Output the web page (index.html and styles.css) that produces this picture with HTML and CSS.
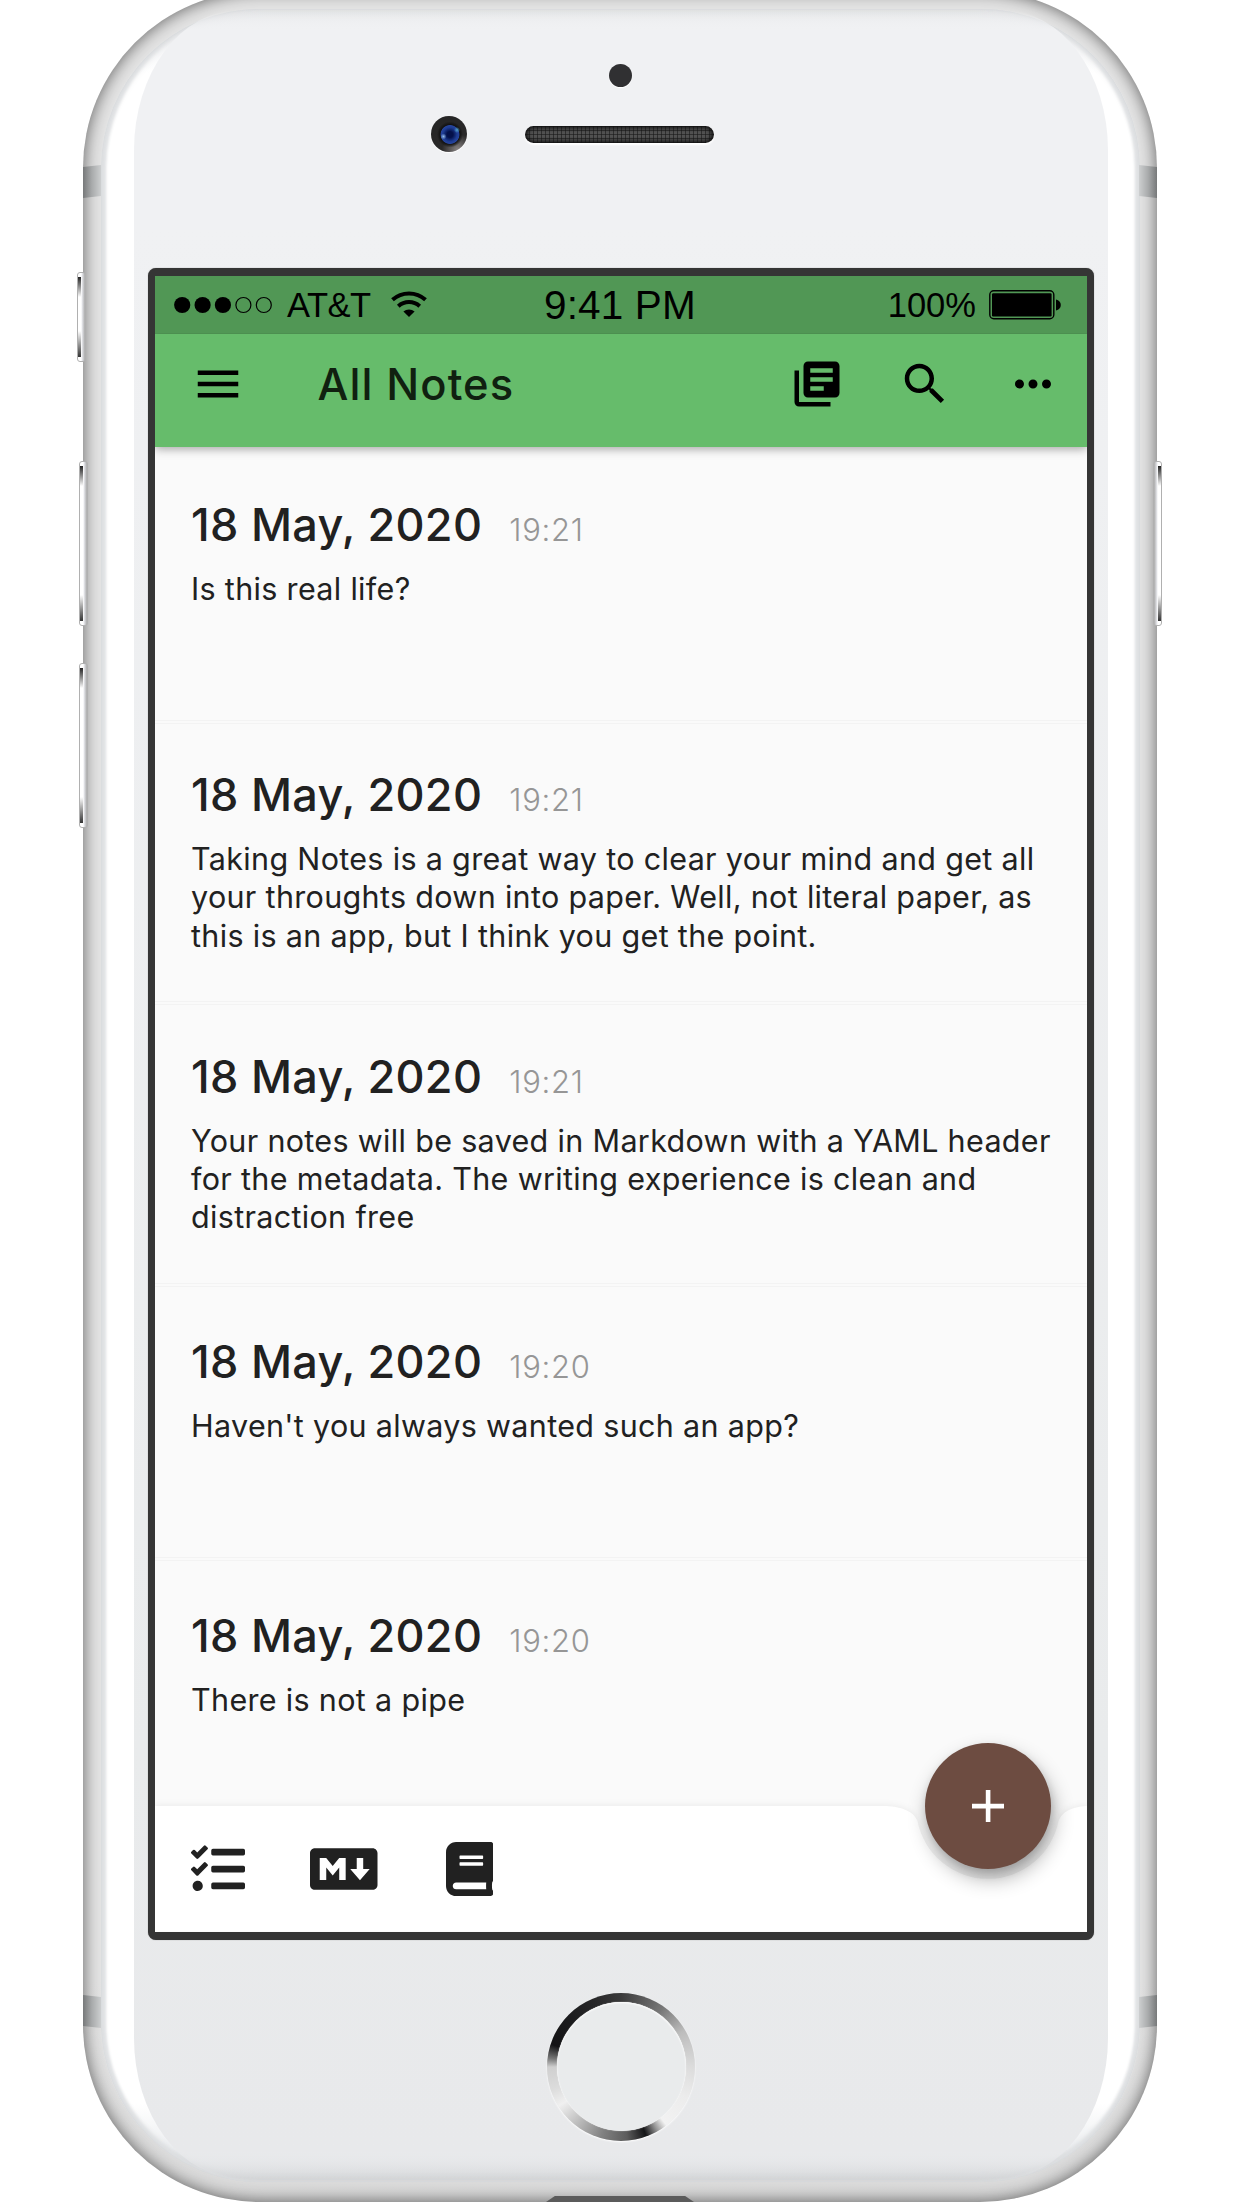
FILE: index.html
```html
<!DOCTYPE html>
<html lang="en">
<head>
<meta charset="utf-8">
<title>All Notes</title>
<link rel="stylesheet" href="styles.css">
</head>
<body>
<div class="stage">
  <div class="phone">
    <i class="side-button mute"></i>
    <i class="side-button volume-up"></i>
    <i class="side-button volume-down"></i>
    <i class="side-button power"></i>
    <i class="antenna top left"></i>
    <i class="antenna top right"></i>
    <i class="antenna bottom left"></i>
    <i class="antenna bottom right"></i>
    <i class="port"></i>
    <div class="glass">
      <div class="face">
        <div class="earpiece">
          <i class="sensor"></i>
          <i class="camera"></i>
          <i class="speaker"></i>
        </div>
        <div class="screen">
          <div class="status">
            <div class="status-left">
              <svg class="signal" width="98" height="18" viewBox="0 0 98 18"><circle cx="8.2" cy="9" r="8.1"/><circle cx="28.6" cy="9" r="8.1"/><circle cx="48.9" cy="9" r="8.1"/><g fill="none" stroke="#000" stroke-width="1.2"><circle cx="69.4" cy="9" r="7.5"/><circle cx="89.8" cy="9" r="7.5"/></g></svg>
              <span class="carrier">AT&amp;T</span>
              <svg class="wifi" width="36" height="26" viewBox="0 0 36 26"><path d="M18 26l-5.6-5.6a9 9 0 0 1 11.2 0z"/><g fill="none" stroke="#000" stroke-width="4"><path d="M1.5 8.800a24.500 24.500 0 0 1 33 0"/><path d="M7.300 15.200a16 16 0 0 1 21.400 0"/></g></svg>
            </div>
            <span class="clock">9:41 PM</span>
            <div class="status-right">
              <span class="percent">100%</span>
              <svg class="battery" width="72" height="30" viewBox="0 0 72 30"><rect x=".8" y=".8" width="64" height="28" rx="4" fill="none" stroke="#000" stroke-width="1.4"/><rect x="3" y="3.200" width="59.600" height="23.200" rx="1.200"/><path d="M67 9.500c3 .6 4.800 2.800 4.800 5.500s-1.800 4.900-4.800 5.500z"/></svg>
            </div>
          </div>
          <div class="appbar">
            <svg class="icon menu" viewBox="0 0 24 24"><path d="M3 18h18v-2H3v2zm0-5h18v-2H3v2zm0-7v2h18V6H3z"/></svg>
            <h1 class="heading">All Notes</h1>
            <div class="actions">
              <svg class="icon" viewBox="0 0 24 24"><path d="M4 6H2v14c0 1.100.9 2 2 2h14v-2H4V6zm16-4H8c-1.100 0-2 .9-2 2v12c0 1.100.9 2 2 2h12c1.100 0 2-.9 2-2V4c0-1.100-.9-2-2-2zm-1 9H9V9h10v2zm-4 4H9v-2h6v2zm4-8H9V5h10v2z"/></svg>
              <svg class="icon" viewBox="0 0 24 24"><path d="M15.500 14h-.79l-.28-.27C15.410 12.590 16 11.110 16 9.500 16 5.910 13.090 3 9.500 3S3 5.910 3 9.500 5.910 16 9.500 16c1.610 0 3.090-.59 4.230-1.570l.27.28v.79l5 4.990L20.490 19l-4.990-5zm-6 0C7.010 14 5 11.990 5 9.500S7.010 5 9.500 5 14 7.010 14 9.500 11.990 14 9.500 14z"/></svg>
              <svg class="icon" viewBox="0 0 24 24"><path d="M6 10c-1.100 0-2 .9-2 2s.9 2 2 2 2-.9 2-2-.9-2-2-2zm12 0c-1.100 0-2 .9-2 2s.9 2 2 2 2-.9 2-2-.9-2-2-2zm-6 0c-1.100 0-2 .9-2 2s.9 2 2 2 2-.9 2-2-.9-2-2-2z"/></svg>
            </div>
          </div>
          <div class="notes">
            <article class="note">
              <header class="note-head"><h2 class="date">18 May, 2020</h2><span class="time">19:21</span></header>
              <p class="text">Is this real life?</p>
            </article>
            <article class="note tall">
              <header class="note-head"><h2 class="date">18 May, 2020</h2><span class="time">19:21</span></header>
              <p class="text">Taking Notes is a great way to clear your mind and get all<br>your throughts down into paper. Well, not literal paper, as<br>this is an app, but I think you get the point.</p>
            </article>
            <article class="note tall">
              <header class="note-head"><h2 class="date">18 May, 2020</h2><span class="time">19:21</span></header>
              <p class="text">Your notes will be saved in Markdown with a YAML header<br>for the metadata. The writing experience is clean and<br>distraction free</p>
            </article>
            <article class="note">
              <header class="note-head"><h2 class="date">18 May, 2020</h2><span class="time">19:20</span></header>
              <p class="text">Haven't you always wanted such an app?</p>
            </article>
            <article class="note">
              <header class="note-head"><h2 class="date">18 May, 2020</h2><span class="time">19:20</span></header>
              <p class="text">There is not a pipe</p>
            </article>
          </div>
          <div class="bottombar">
            <svg class="bar-shape" width="932" height="126" viewBox="0 0 932 126"><path d="M0 0H726C748 0 759 6 762.400 15A72 72 0 0 0 903.600 15C907 6 916 1 932 0V126H0z"/></svg>
            <svg class="tool" width="54" height="54" viewBox="0 0 512 512"><path d="M139.610 35.500a12 12 0 0 0-17 0L58.930 98.810l-22.700-22.120a12 12 0 0 0-17 0L3.530 92.410a12 12 0 0 0 0 17l47.590 47.400a12.780 12.780 0 0 0 17.610 0l15.590-15.620L156.520 69a12.090 12.090 0 0 0 .09-17zm0 159.190a12 12 0 0 0-17 0l-63.680 63.720-22.700-22.100a12 12 0 0 0-17 0L3.530 252a12 12 0 0 0 0 17L51 316.500a12.770 12.770 0 0 0 17.600 0l15.700-15.690 72.200-72.220a12 12 0 0 0 .09-16.900zM64 368c-26.490 0-48.590 21.500-48.590 48S37.530 464 64 464a48 48 0 0 0 0-96zm432 16H208a16 16 0 0 0-16 16v32a16 16 0 0 0 16 16h288a16 16 0 0 0 16-16v-32a16 16 0 0 0-16-16zm0-320H208a16 16 0 0 0-16 16v32a16 16 0 0 0 16 16h288a16 16 0 0 0 16-16V80a16 16 0 0 0-16-16zm0 160H208a16 16 0 0 0-16 16v32a16 16 0 0 0 16 16h288a16 16 0 0 0 16-16v-32a16 16 0 0 0-16-16z"/></svg>
            <svg class="tool" width="67.5" height="54" viewBox="0 0 640 512"><path d="M593.800 59.100H46.200C20.700 59.100 0 79.800 0 105.200v301.500c0 25.500 20.700 46.200 46.200 46.200h547.700c25.500 0 46.200-20.700 46.100-46.100V105.200c0-25.400-20.700-46.100-46.200-46.100zM338.500 360.600H277v-120l-61.500 76.900-61.500-76.900v120H92.300V151.400h61.500l61.500 76.900 61.500-76.900h61.500v209.200zm135.300 3.100L381.500 256H443V151.400h61.500V256H566z"/></svg>
            <svg class="tool book" width="47.25" height="54" viewBox="0 0 448 512"><path d="M448 360V24c0-13.300-10.700-24-24-24H96C43 0 0 43 0 96v320c0 53 43 96 96 96h328c13.300 0 24-10.700 24-24v-16c0-7.500-3.500-14.300-8.900-18.700-4.200-15.400-4.200-59.300 0-74.700 5.400-4.300 8.900-11.100 8.900-18.600zM128 134c0-3.300 2.700-6 6-6h212c3.300 0 6 2.700 6 6v20c0 3.300-2.700 6-6 6H134c-3.300 0-6-2.700-6-6v-20zm0 64c0-3.300 2.700-6 6-6h212c3.300 0 6 2.700 6 6v20c0 3.300-2.700 6-6 6H134c-3.300 0-6-2.700-6-6v-20zm253.400 250H96c-17.700 0-32-14.300-32-32 0-17.600 14.400-32 32-32h285.400c-1.900 17.100-1.900 46.900 0 64z"/></svg>
            <div class="fab"><svg width="32" height="32" viewBox="0 0 32 32"><path d="M13.800 0h4.600v13.800H32v4.600H18.400V32h-4.600V18.400H0v-4.600h13.800z" fill="#fff"/></svg></div>
          </div>
        </div>
        <div class="home"><i class="home-face"></i></div>
      </div>
    </div>
  </div>
</div>
</body>
</html>
```
FILE: styles.css
```css
* { box-sizing: border-box; }
body { margin: 0; background: #fff; font-family: Inter, "Liberation Sans", sans-serif; }
h1, h2, p { margin: 0; font-weight: inherit; }
i, svg { display: block; }

.stage { width: 1242px; height: 2208px; overflow: hidden; display: flow-root; }

/* Device */
.phone {
  position: relative;
  width: 1074px;
  height: 2211px;
  margin: -9px 0 0 83px;
  padding: 18px 17px 0 18px;
  border-radius: 177px;
  background: linear-gradient(#e4e4e4, #e4e4e4 90%, #dadada);
  box-shadow: inset 0 0 17px rgba(0, 0, 0, .6);
}
.glass {
  height: 2173px;
  padding: 1px 32px 0 33px;
  border-radius: 159px;
  background: linear-gradient(#e6e7e9, #f0f1f3 22px, #fff 64px, #fff 2095px, #eceef0 2140px, #d3d5d7);
  box-shadow: inset 0 0 2px #cfd1d3, inset 5px 0 3px #dfe1e3, inset -5px 0 3px #dfe1e3, inset 0 6px 8px -2px #dfe0e2, inset 0 -6px 6px -2px #d3d5d7;
}
.face {
  height: 2168px;
  padding: 0 14px;
  border-radius: 105px / 140px;
  background: linear-gradient(rgba(240, 241, 243, 0), #f0f1f3 20px, #f0f1f3 10%, #e9ebec 80%, #e8e9eb 2140px, rgba(220, 222, 224, 0));
}
.side-button {
  position: absolute;
  width: 9px;
  height: 165px;
  border-radius: 3px;
  border: 1px solid #b0b0b0;
  background:
    linear-gradient(#222, transparent 20px, transparent calc(100% - 26px), #333) 0 4px / 3px calc(100% - 8px) no-repeat,
    linear-gradient(90deg, #fff 45%, #e3e4e8 60%, #aaa);
}
.mute { left: -6px; top: 281px; height: 90px; }
.volume-up { left: -4px; top: 470px; }
.volume-down { left: -4px; top: 672px; }
.power { right: -5px; top: 470px; transform: scaleX(-1); }
.antenna {
  position: absolute;
  width: 18px;
  height: 33px;
  background: linear-gradient(90deg, #77797a, #a9abac 50%, #cdcfd0);
  clip-path: polygon(0 6%, 100% 0, 100% 94%, 0 100%);
}
.antenna.top { top: 174px; }
.antenna.bottom { top: 2004px; clip-path: polygon(0 0, 100% 6%, 100% 100%, 0 94%); }
.antenna.left { left: 0; }
.antenna.right { right: 0; }
.antenna.top.right { transform: scaleX(-1); }
.antenna.bottom.right { transform: scaleX(-1); }
.port {
  position: absolute;
  left: 463px;
  bottom: 0;
  width: 148px;
  height: 6px;
  background: #5b5b5b;
  clip-path: polygon(6% 0, 94% 0, 100% 100%, 0 100%);
}
.earpiece { position: relative; height: 257.500px; }
.sensor {
  position: absolute;
  left: 461px;
  top: 53.500px;
  width: 23px;
  height: 23px;
  border-radius: 50%;
  background: #303032;
  box-shadow: 0 1px 1px #fff;
}
.camera {
  position: absolute;
  left: 283px;
  top: 106px;
  width: 36px;
  height: 36px;
  border-radius: 50%;
  background:
    radial-gradient(circle at 12.500px 20.500px, #8fb8e6, rgba(80, 130, 210, 0) 3px),
    radial-gradient(circle at 26px 14px, #4fa0c8, rgba(80, 130, 210, 0) 3px),
    radial-gradient(circle at 19px 18.500px, #04114a 3px, #1d3c93 7px, #26449c 9px, rgba(15, 15, 15, .9) 9.800px, rgba(30, 30, 30, 0) 13px),
    radial-gradient(circle at 27px 34px, #8a8585, #2a2929 16px, #232323);
  box-shadow: 0 1px 1px #fff;
}
.speaker {
  position: absolute;
  left: 377px;
  top: 116px;
  width: 189px;
  height: 17px;
  border-radius: 9px;
  background:
    repeating-linear-gradient(90deg, rgba(20, 20, 20, .55) 0 1px, transparent 1px 4px),
    repeating-linear-gradient(rgba(20, 20, 20, .55) 0 1px, transparent 1px 4px),
    #515151;
  box-shadow: inset 0 0 4px 2px #111, 0 2px 2px #fff;
}
.home {
  width: 148px;
  height: 148px;
  margin: 53px auto 0;
  padding: 9.500px;
  border-radius: 50%;
  background: conic-gradient(#3a3a3b, #777 35deg, #bcbcbc 60deg, #dcdcdc 90deg, #ececec 115deg, #f2f2f2 142deg, #999 150deg, #151517 160deg, #5c5c5c 175deg, #808080 195deg, #b5b5b5 215deg, #f0f0f0 238deg, #dcdcdc 252deg, #cfcfcf 270deg, #777 277deg, #131315 288deg, #1c1c1e 315deg, #29292a 340deg, #3a3a3b);
  box-shadow: 0 1px 2px #fff;
}
.home-face {
  height: 100%;
  border-radius: 50%;
  background: #e9ebec;
  box-shadow: inset 0 1px 2px #fff, 0 0 1px #fff;
}

/* Screen */
.screen {
  height: 1672px;
  border: 7.500px solid #353535;
  border-width: 8px 7px;
  border-radius: 8px;
  background: #fafafa;
  box-shadow: 0 0 1px #777;
  display: flex;
  flex-direction: column;
}
.status {
  position: relative;
  flex: none;
  height: 58px;
  padding: 1px 26px 0 19px;
  background: #519755;
  font-family: "Liberation Sans", Arial, sans-serif;
  display: grid;
  grid-template-columns: 1fr auto 1fr;
  align-items: center;
  color: #000;
}
.status-left, .status-right { display: flex; align-items: center; }
.status-right { justify-content: flex-end; gap: 13px; }
.signal { margin-right: 15px; }
.carrier, .percent { font-size: 34.500px; line-height: 38px; }
.carrier { width: 83px; letter-spacing: -.5px; }
.wifi { margin-left: 21px; margin-top: -2px; }
.clock { margin-left: 5px; font-size: 40.500px; line-height: 46px; letter-spacing: .15px; }
.appbar {
  position: relative;
  z-index: 1;
  flex: none;
  height: 113px;
  padding: 0 0 13px 9px;
  background: #66bc6b;
  display: flex;
  align-items: center;
  box-shadow: 0 2px 9px rgba(0, 0, 0, .35);
  clip-path: inset(0 0 -20px 0);
}
.icon { width: 108px; height: 54px; padding: 0 27px; flex: none; }
.heading {
  margin-left: 45.500px;
  font-size: 43.500px;
  font-weight: 450;
  letter-spacing: 1.100px;
  line-height: 54px;
  color: #102010;
}
.actions { display: flex; margin-left: auto; }

.notes { height: 1359px; overflow: hidden; }
.note {
  height: 274px;
  padding: 51px 36px 0;
  border-bottom: 1px solid #f3f3f3;
  box-shadow: 0 2px 0 #fafafa, 0 3px 0 #f3f3f3;
}
.note.tall { height: 281.500px; padding-top: 47.500px; }
.note-head { display: flex; align-items: baseline; }
.date {
  font-size: 45px;
  font-weight: 480;
  line-height: 54px;
  letter-spacing: .3px;
  color: #212121;
  white-space: nowrap;
}
.time { margin-left: 27px; font-size: 31px; font-weight: 350; letter-spacing: .7px; line-height: 38px; color: #969696; }
.text {
  margin-top: 18px;
  font-size: 30.500px;
  line-height: 38.250px;
  letter-spacing: .33px;
  color: #212121;
  white-space: nowrap;
}

.bottombar {
  position: relative;
  height: 126px;
  padding: 0 36px;
  display: flex;
  align-items: center;
  gap: 65px;
}
.bar-shape {
  position: absolute;
  left: 0;
  top: 0;
  fill: #fff;
  filter: drop-shadow(0 -1px 3px rgba(0, 0, 0, .06));
  clip-path: inset(-12px 0 0 0);
}
.tool { position: relative; fill: #212121; }
.book { margin-left: 3.500px; }
.fab {
  position: absolute;
  left: 770px;
  top: -63px;
  width: 126px;
  height: 126px;
  border-radius: 50%;
  background: #6d4c41;
  display: flex;
  align-items: center;
  justify-content: center;
  box-shadow: 3px 10px 20px rgba(0, 0, 0, .3), 1px 5px 8px rgba(0, 0, 0, .14);
}
```
